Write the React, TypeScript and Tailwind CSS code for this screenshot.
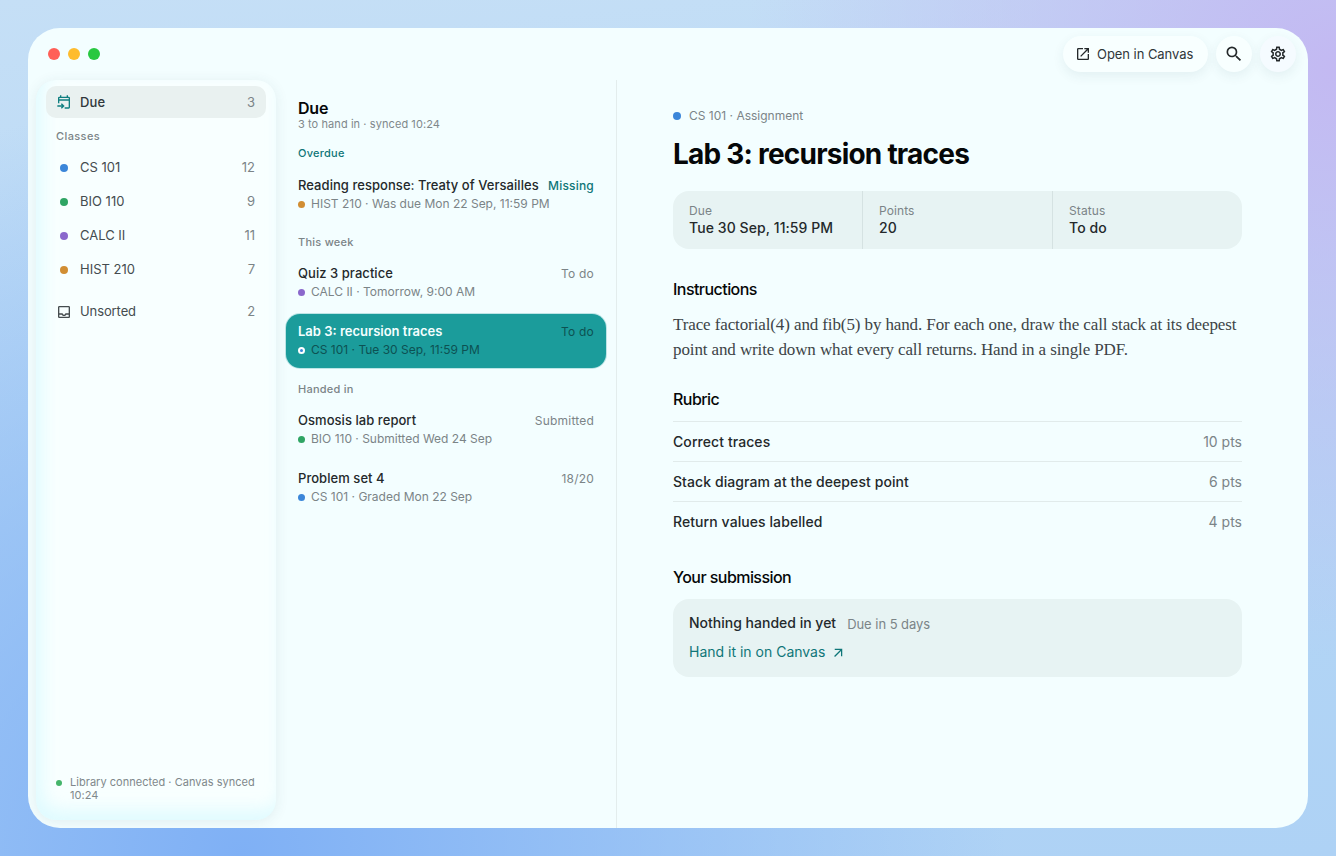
import { MdOutlineOpenInNew, MdSearch, MdOutlineSettings, MdOutlineInbox, MdArrowOutward } from "react-icons/md";

const classes = [
  { name: "CS 101", count: 12, color: "bg-[#3b86d9]" },
  { name: "BIO 110", count: 9, color: "bg-[#2fa564]" },
  { name: "CALC II", count: 11, color: "bg-[#8a68cc]" },
  { name: "HIST 210", count: 7, color: "bg-[#d18e33]" },
];

const rubric = [
  { label: "Correct traces", pts: "10 pts" },
  { label: "Stack diagram at the deepest point", pts: "6 pts" },
  { label: "Return values labelled", pts: "4 pts" },
];

function DueIcon() {
  return (
    <svg width="16" height="16" viewBox="0 0 24 24" fill="none" stroke="currentColor" strokeWidth="2" className="text-[#0f7f80]">
      <path d="M7 2v4M17 2v4M4 14V6a1 1 0 0 1 1-1h14a1 1 0 0 1 1 1v14a1 1 0 0 1-1 1h-6M4 9h16" />
      <path d="M2 18h9M8 14.5l3.5 3.5L8 21.5" />
    </svg>
  );
}

function Row({
  title,
  right,
  meta,
  dot,
  rightClass = "text-[#7b8487]",
}: {
  title: string;
  right: string;
  meta: string;
  dot: string;
  rightClass?: string;
}) {
  return (
    <div className="h-[54px] px-3 pt-[9px]">
      <div className="flex items-center justify-between h-[18px]">
        <span className="text-[13px] font-medium tracking-[0.05px] text-[#24292b]">{title}</span>
        <span className={`text-xs tracking-[0.2px] ${rightClass}`}>{right}</span>
      </div>
      <div className="flex items-center h-[18px] text-xs text-[#7b8487]">
        <span className={`w-[7px] h-[7px] rounded-full mr-[6px] ${dot}`} />
        {meta}
      </div>
    </div>
  );
}

function Heading({ children }: { children: string }) {
  return <h2 className="text-[16px] leading-5 font-medium tracking-[-0.55px] text-[#050708]">{children}</h2>;
}

export default function App() {
  return (
    <div className="h-[856px] p-[28px] bg-[radial-gradient(circle_at_100%_8%,#c3b9f2_0%,rgba(195,185,242,0)_38%),radial-gradient(circle_at_18%_100%,#7fb0f5_0%,rgba(127,176,245,0)_55%),linear-gradient(175deg,#c5dff6_0%,#b4d6f5_55%,#aed2f5_100%)] font-['Inter',sans-serif]">
      <div className="h-full flex flex-col rounded-[32px] bg-[#f3feff] overflow-hidden">
        {/* Title bar */}
        <div className="h-[52px] shrink-0 flex items-center pl-5 pr-3">
          <div className="flex gap-2">
            <span className="w-3 h-3 rounded-full bg-[#ff5f57]" />
            <span className="w-3 h-3 rounded-full bg-[#febc2e]" />
            <span className="w-3 h-3 rounded-full bg-[#28c840]" />
          </div>
          <div className="ml-auto flex items-center gap-2">
            <div className="h-9 w-[145px] rounded-full bg-[#f8ffff] shadow-[0_4px_12px_rgba(40,80,90,0.08)] flex items-center pl-[12px] gap-[6px] text-[13px] tracking-[-0.05px] text-[#30373a]">
              <MdOutlineOpenInNew size={16} className="text-[#24292b]" />
              <span className="mt-px">Open in Canvas</span>
            </div>
            <div className="w-9 h-9 rounded-full bg-[#f8ffff] shadow-[0_4px_12px_rgba(40,80,90,0.08)] flex items-center justify-center">
              <MdSearch size={20} className="text-[#24292b] -mt-px" />
            </div>
            <div className="w-9 h-9 rounded-full bg-[#f5fbff] shadow-[0_4px_12px_rgba(40,80,90,0.08)] flex items-center justify-center">
              <MdOutlineSettings size={18} className="text-[#24292b] -mt-px" />
            </div>
          </div>
        </div>

        <div className="flex-1 min-h-0 flex">
          {/* Sidebar */}
          <aside className="ml-2 mb-2 w-[240px] shrink-0 rounded-[20px] bg-[#f8ffff] shadow-[0_2px_14px_rgba(40,80,90,0.09),inset_6px_-10px_16px_rgba(190,245,255,0.4)] px-[10px] pt-[6px] pb-[18px] flex flex-col">
            <div className="h-8 rounded-[10px] bg-[#e9f1f0] flex items-center pl-[10px] pr-[11px]">
              <DueIcon />
              <span className="ml-2 mt-px text-[13px] font-medium tracking-[0.1px] text-[#30373a]">Due</span>
              <span className="ml-auto mt-px text-[13px] text-[#7b8487]">3</span>
            </div>
            <div className="pl-[10px] mt-[10px] h-4 flex items-center text-[11px] font-medium tracking-[0.4px] text-[#7b8487]">Classes</div>
            <div className="mt-[7px]">
              {classes.map((c) => (
                <div key={c.name} className="h-[34px] flex items-center pl-[14px] pr-[11px] text-[13px] text-[#454c4f]">
                  <span className={`w-2 h-2 rounded-full ${c.color}`} />
                  <span className="ml-3">{c.name}</span>
                  <span className="ml-auto text-[#7b8487]">{c.count}</span>
                </div>
              ))}
            </div>
            <div className="mt-2 h-[34px] flex items-center pl-[10px] pr-[11px] text-[13px] tracking-[-0.1px] text-[#454c4f]">
              <MdOutlineInbox size={16} className="text-[#454c4f]" />
              <span className="ml-2">Unsorted</span>
              <span className="ml-auto text-[#7b8487]">2</span>
            </div>
            <div className="mt-auto pl-[10px] flex text-[11px] leading-[13px] tracking-[0.03px] text-[#7f888b]">
              <span className="w-[6px] h-[6px] rounded-full bg-[#45b56b] mt-[4px] mr-2 shrink-0" />
              <span>Library connected · Canvas synced 10:24</span>
            </div>
          </aside>

          {/* List */}
          <section className="w-[341px] shrink-0 border-r border-[#e3eded] px-[10px] pt-[18px]">
            <div className="px-3">
              <h1 className="text-base leading-5 font-semibold tracking-[-0.2px] text-[#050708]">Due</h1>
              <p className="text-[11px] leading-[13px] tracking-[0.08px] text-[#7f888b]">3 to hand in · synced 10:24</p>
            </div>
            <div className="px-3 mt-[15px] h-[14px] flex items-center text-[11px] font-medium tracking-[0.25px] text-[#0f7678]">Overdue</div>
            <div className="mt-2">
              <Row title="Reading response: Treaty of Versailles" right="Missing" meta="HIST 210 · Was due Mon 22 Sep, 11:59 PM" dot="bg-[#d18e33]" rightClass="text-[#0f7678] font-medium" />
            </div>
            <div className="px-3 mt-[13px] h-[14px] flex items-center text-[11px] font-medium tracking-[0.25px] text-[#7b8487]">This week</div>
            <div className="mt-[7px] flex flex-col gap-1">
              <Row title="Quiz 3 practice" right="To do" meta="CALC II · Tomorrow, 9:00 AM" dot="bg-[#8a68cc]" />
              <div className="h-[54px] px-3 pt-[9px] rounded-[14px] bg-[#1b9c9b] shadow-[0_0_0_1px_rgba(27,156,155,0.25)]">
                <div className="flex items-center justify-between h-[18px]">
                  <span className="text-[13px] font-semibold text-[#f5ffff]">Lab 3: recursion traces</span>
                  <span className="text-xs tracking-[0.2px] text-[#0d5152]">To do</span>
                </div>
                <div className="flex items-center h-[18px] text-xs text-[#0d5152]">
                  <span className="w-[7px] h-[7px] rounded-full mr-[6px] bg-[#3b86d9] border-2 border-white" />
                  CS 101 · Tue 30 Sep, 11:59 PM
                </div>
              </div>
            </div>
            <div className="px-3 mt-[14px] h-[14px] flex items-center text-[11px] font-medium tracking-[0.25px] text-[#7b8487]">Handed in</div>
            <div className="mt-[7px] flex flex-col gap-1">
              <Row title="Osmosis lab report" right="Submitted" meta="BIO 110 · Submitted Wed 24 Sep" dot="bg-[#2fa564]" />
              <Row title="Problem set 4" right="18/20" meta="CS 101 · Graded Mon 22 Sep" dot="bg-[#3b86d9]" />
            </div>
          </section>

          {/* Detail */}
          <main className="flex-1 pl-[56px] pr-[66px] pt-[28px]">
            <div className="flex items-center h-4 text-xs text-[#7b8487]">
              <span className="w-2 h-2 rounded-full bg-[#3b86d9] mr-2" />
              CS 101 · Assignment
            </div>
            <h1 className="mt-[12px] text-[28px] leading-9 font-bold tracking-[-0.78px] text-[#050708]">Lab 3: recursion traces</h1>
            <div className="mt-[19px] h-[58px] rounded-2xl bg-[#e7f3f3] grid grid-cols-[190px_190px_1fr]">
              {[
                ["Due", "Tue 30 Sep, 11:59 PM"],
                ["Points", "20"],
                ["Status", "To do"],
              ].map(([k, v], i) => (
                <div key={k} className={`px-4 pt-3 ${i < 2 ? "border-r border-[#d5e2e2]" : ""}`}>
                  <div className="text-xs leading-4 tracking-[0.1px] text-[#7b8487]">{k}</div>
                  <div className="text-[14px] leading-[18px] font-medium tracking-[0.08px] text-[#24292b]">{v}</div>
                </div>
              ))}
            </div>

            <div className="mt-[30px]">
              <Heading>Instructions</Heading>
            </div>
            <p className="mt-[13px] text-[17px] leading-[25px] tracking-[-0.11px] text-[#3d4447] font-['Liberation_Serif',serif]">
              Trace factorial(4) and fib(5) by hand. For each one, draw the call stack at its deepest point and write down what every call returns. Hand in a single PDF.
            </p>

            <div className="mt-[27px]">
              <Heading>Rubric</Heading>
            </div>
            <div className="mt-[12px] border-t border-[#e1ebeb]">
              {rubric.map((r, i) => (
                <div key={r.label} className={`h-10 flex items-center justify-between text-sm ${i < 2 ? "border-b border-[#e1ebeb]" : ""}`}>
                  <span className="font-medium tracking-[0.08px] text-[#24292b]">{r.label}</span>
                  <span className="text-[#7b8487]">{r.pts}</span>
                </div>
              ))}
            </div>

            <div className="mt-[25px]">
              <Heading>Your submission</Heading>
            </div>
            <div className="mt-[12px] h-[78px] rounded-2xl bg-[#e7f3f3] px-4 pt-[14px]">
              <div className="flex items-center h-[20px]">
                <span className="text-sm font-medium text-[#24292b]">Nothing handed in yet</span>
                <span className="ml-[11px] mt-[3px] text-[13px] tracking-[-0.04px] text-[#7b8487]">Due in 5 days</span>
              </div>
              <div className="mt-[9px] flex items-center text-sm text-[#0f7678]">
                Hand it in on Canvas
                <MdArrowOutward size={15} className="ml-[6px]" />
              </div>
            </div>
          </main>
        </div>
      </div>
    </div>
  );
}
